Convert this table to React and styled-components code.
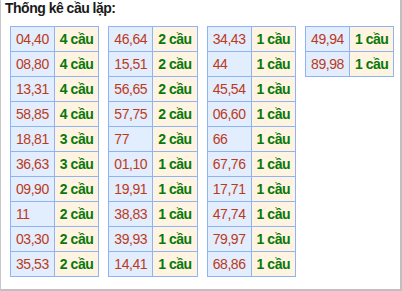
import React from 'react'
import styled, { createGlobalStyle } from 'styled-components'

const GlobalStyle = createGlobalStyle`
  html, body {
    margin: 0;
    padding: 0;
    background: #ffffff;
  }
`

const Box = styled.div`
  box-sizing: border-box;
  width: 402px;
  height: 291px;
  background: #ffffff;
  border-left: 1px solid #c8c8c8;
  border-right: 2px solid #c0c0c0;
  border-bottom: 2px solid #c0c0c0;
  font-family: "Liberation Sans", Arial, sans-serif;
  padding: 0 0 0 4px;
`

const Title = styled.div`
  font-size: 14px;
  font-weight: bold;
  letter-spacing: -0.5px;
  color: #1a1a1a;
  line-height: 17px;
  margin-bottom: 9px;
`

const Tables = styled.div`
  display: flex;
  align-items: flex-start;
  gap: 9px;
  padding-left: 5px;
`

const Table = styled.table`
  border-collapse: collapse;
  font-size: 14px;
  letter-spacing: -0.45px;
`

const Cell = styled.td`
  height: 24px;
  padding: 0 5px;
  border: 1px solid #8fb4f4;
  white-space: nowrap;
  text-align: left;
  vertical-align: middle;
  line-height: 16px;
  background: ${({ $kind }) => ($kind === 'num' ? '#e2edfe' : '#fff4e2')};
  color: ${({ $kind }) => ($kind === 'num' ? '#bc3a1a' : '#087808')};
  font-weight: ${({ $kind }) => ($kind === 'num' ? 'normal' : 'bold')};
`

const columns = [
  [['04,40', 4], ['08,80', 4], ['13,31', 4], ['58,85', 4], ['18,81', 3], ['36,63', 3], ['09,90', 2], ['11', 2], ['03,30', 2], ['35,53', 2]],
  [['46,64', 2], ['15,51', 2], ['56,65', 2], ['57,75', 2], ['77', 2], ['01,10', 1], ['19,91', 1], ['38,83', 1], ['39,93', 1], ['14,41', 1]],
  [['34,43', 1], ['44', 1], ['45,54', 1], ['06,60', 1], ['66', 1], ['67,76', 1], ['17,71', 1], ['47,74', 1], ['79,97', 1], ['68,86', 1]],
  [['49,94', 1], ['89,98', 1]],
]

export default function App() {
  return (
    <>
      <GlobalStyle />
      <Box>
        <Title>Thống kê cầu lặp:</Title>
        <Tables>
          {columns.map((rows, i) => (
            <Table key={i}>
              <tbody>
                {rows.map(([pair, n]) => (
                  <tr key={pair}>
                    <Cell $kind="num">{pair}</Cell>
                    <Cell $kind="count">{n} cầu</Cell>
                  </tr>
                ))}
              </tbody>
            </Table>
          ))}
        </Tables>
      </Box>
    </>
  )
}
